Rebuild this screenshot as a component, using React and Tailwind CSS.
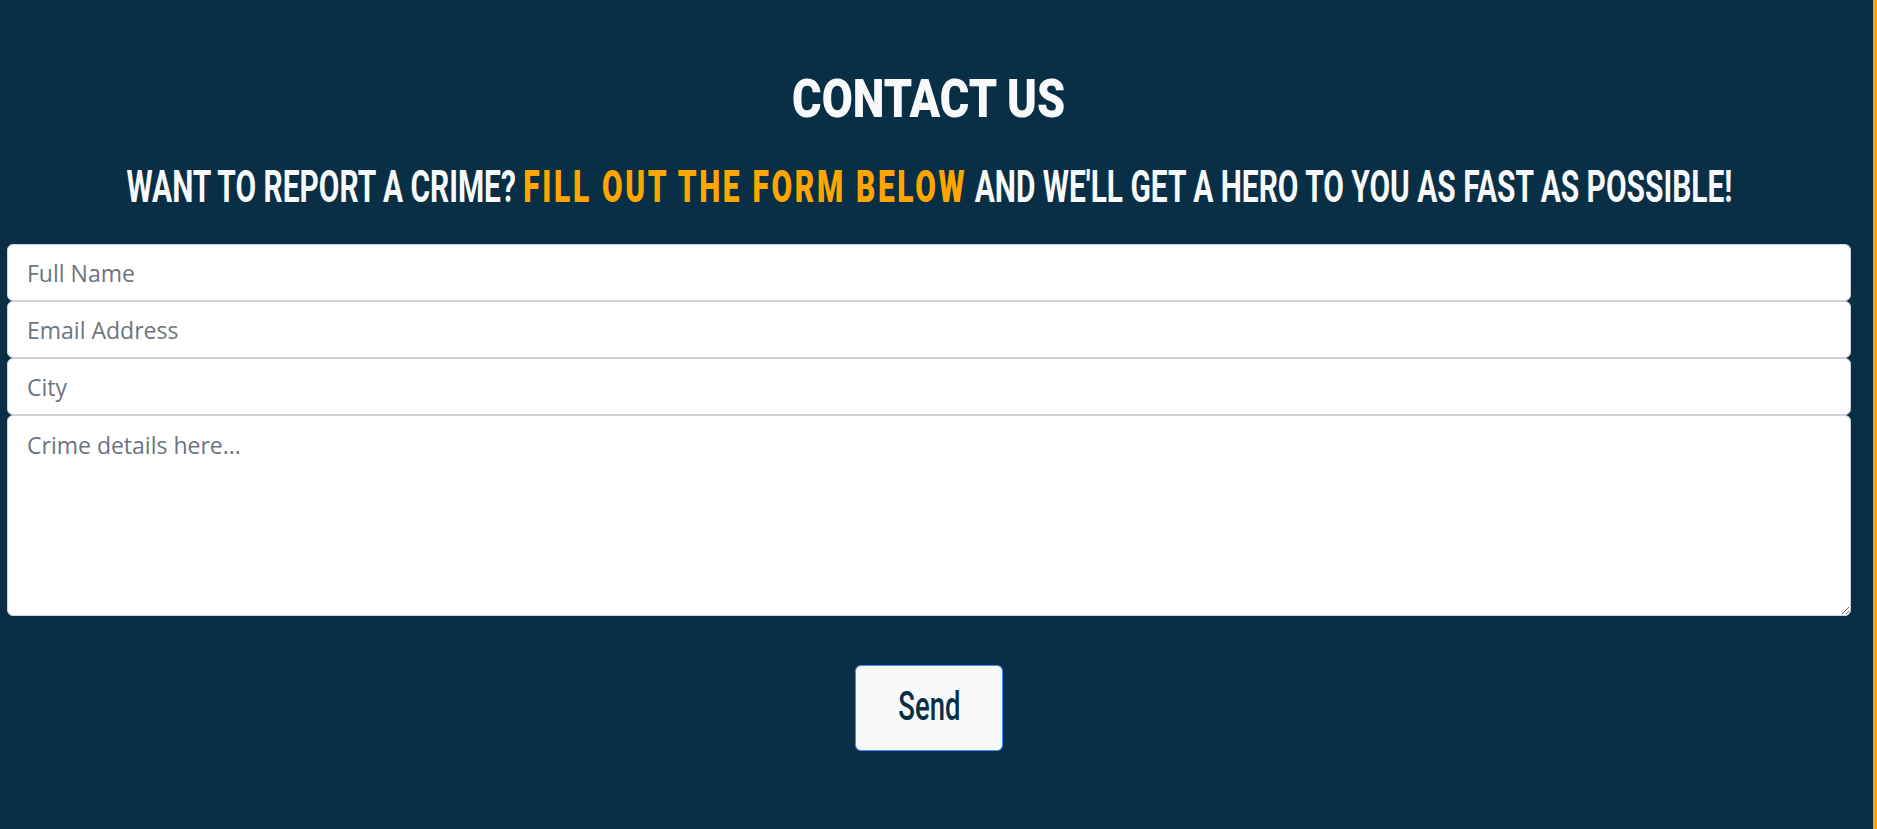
import React, { useState } from "react";

const inputClass =
  "block w-full h-[57px] bg-white border border-[#ced4da] rounded-[6px] px-[19px] text-[23px] text-[#212529] placeholder:text-[#6c757d] outline-none";

const App = () => {
  const [form, setForm] = useState({ name: "", email: "", city: "", details: "" });

  const handleChange = (e) => {
    setForm({ ...form, [e.target.name]: e.target.value });
  };

  const handleSubmit = (e) => {
    e.preventDefault();
  };

  return (
    <div className="h-[829px] w-full bg-[#082f46] border-r-4 border-[#fca311] overflow-hidden font-['Roboto',sans-serif]">
      <div className="w-[1858px] px-[7px] pt-[73px]">
        {/* heading */}
        <div className="flex justify-center">
          <h2 className="whitespace-nowrap text-[53px] leading-none font-black text-[#f8f9fa] scale-x-[0.85]">
            CONTACT US
          </h2>
        </div>
        <div className="flex justify-center mt-[38px]">
          <p className="whitespace-nowrap text-[45px] leading-none font-bold text-[#f8f9fa] scale-x-[0.665]">
            WANT TO REPORT A CRIME?{" "}
            <span className="text-[#ffa500] font-black tracking-[4px]">FILL OUT THE FORM BELOW</span>{" "}
            AND WE'LL GET A HERO TO YOU AS FAST AS POSSIBLE!
          </p>
        </div>

        {/* form */}
        <form onSubmit={handleSubmit} className="mt-[35px] font-['Open_Sans',sans-serif]">
          <input
            name="name"
            value={form.name}
            onChange={handleChange}
            placeholder="Full Name"
            className={inputClass}
          />
          <input
            name="email"
            value={form.email}
            onChange={handleChange}
            placeholder="Email Address"
            className={inputClass}
          />
          <input
            name="city"
            value={form.city}
            onChange={handleChange}
            placeholder="City"
            className={inputClass}
          />
          <textarea
            name="details"
            value={form.details}
            onChange={handleChange}
            placeholder="Crime details here..."
            className="block w-full h-[201px] bg-white border border-[#ced4da] rounded-[6px] px-[19px] pt-[12px] text-[23px] leading-[1.5] text-[#212529] placeholder:text-[#6c757d] outline-none"
          />
          <div className="flex justify-center mt-[49px]">
            <button
              type="submit"
              className="w-[148px] h-[86px] bg-[#f8f9fa] border border-[#3d8bfd] rounded-[6px] flex items-center justify-center pb-[4px]"
            >
              <span className="font-['Roboto',sans-serif] text-[41px] leading-none font-medium text-[#082f46] scale-x-[0.67]">
                Send
              </span>
            </button>
          </div>
        </form>
      </div>
    </div>
  );
};

export default App;
